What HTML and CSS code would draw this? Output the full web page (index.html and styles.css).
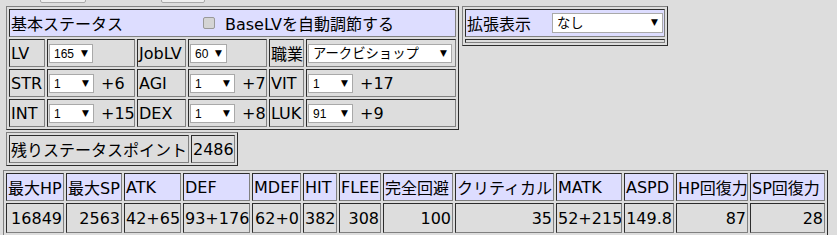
FILE: index.html
```html
<!DOCTYPE html>
<html lang="ja">
<head>
  <meta charset="UTF-8">
  <title>ステータス計算</title>
  <link rel="stylesheet" href="styles.css">
</head>
<body>
  <!-- buttons above, scrolled out of view -->
  <div class="peek">
    <button class="peek-btn" aria-label="読込"></button>
    <button class="peek-btn peek-second" aria-label="保存"></button>
  </div>

  <div class="top">
    <div class="left">
      <!-- 基本ステータス -->
      <table class="grid status">
        <colgroup>
          <col class="c-lv"><col class="c-sel1"><col class="c-job"><col class="c-sel2"><col class="c-class"><col class="c-sel3">
        </colgroup>
        <tr class="row">
          <td colspan="6" class="head">
            <span class="title-label">基本ステータス</span><span class="check"></span><span class="check-text">BaseLVを自動調節する</span>
          </td>
        </tr>
        <tr class="row">
          <td>LV</td>
          <td><span class="sel"><select class="num w-lv"><option>165</option></select></span></td>
          <td>JobLV</td>
          <td><span class="sel"><select class="num w-job"><option>60</option></select></span></td>
          <td>職業</td>
          <td><span class="sel"><select class="w-class"><option>アークビショップ</option></select></span></td>
        </tr>
        <tr class="row">
          <td>STR</td>
          <td><span class="sel"><select class="num w-stat"><option>1</option></select></span><span class="bonus">+6</span></td>
          <td>AGI</td>
          <td><span class="sel"><select class="num w-stat"><option>1</option></select></span><span class="bonus">+7</span></td>
          <td>VIT</td>
          <td><span class="sel"><select class="num w-stat"><option>1</option></select></span><span class="bonus">+17</span></td>
        </tr>
        <tr class="row">
          <td>INT</td>
          <td><span class="sel"><select class="num w-stat"><option>1</option></select></span><span class="bonus">+15</span></td>
          <td>DEX</td>
          <td><span class="sel"><select class="num w-stat"><option>1</option></select></span><span class="bonus">+8</span></td>
          <td>LUK</td>
          <td><span class="sel"><select class="num w-stat"><option>91</option></select></span><span class="bonus">+9</span></td>
        </tr>
      </table>

      <!-- 残りポイント -->
      <table class="grid points">
        <colgroup><col class="c-rest"><col class="c-restval"></colgroup>
        <tr class="row">
          <td>残りステータスポイント</td>
          <td>2486</td>
        </tr>
      </table>
    </div>

    <!-- 拡張表示 -->
    <table class="grid extra">
      <tr class="row">
        <td class="head"><span class="extra-label">拡張表示</span><span class="sel"><select class="w-extra"><option>なし</option></select></span></td>
      </tr>
      <tr class="empty-row"><td></td></tr>
    </table>
  </div>

  <!-- 計算結果 -->
  <table class="grid stats">
    <colgroup>
      <col class="s1"><col class="s2"><col class="s3"><col class="s4"><col class="s5"><col class="s6"><col class="s7">
      <col class="s8"><col class="s9"><col class="s10"><col class="s11"><col class="s12"><col class="s13">
    </colgroup>
    <tr class="stats-head">
      <td>最大HP</td><td>最大SP</td><td>ATK</td><td>DEF</td><td>MDEF</td><td>HIT</td><td>FLEE</td>
      <td>完全回避</td><td>クリティカル</td><td>MATK</td><td>ASPD</td><td>HP回復力</td><td>SP回復力</td>
    </tr>
    <tr class="stats-val">
      <td>16849</td><td>2563</td><td>42+65</td><td>93+176</td><td>62+0</td><td>382</td><td>308</td>
      <td>100</td><td>35</td><td>52+215</td><td>149.8</td><td>87</td><td>28</td>
    </tr>
  </table>
</body>
</html>
```

FILE: styles.css
```css
/* Page */
body {
  margin: 0;
  padding: 0 3px;
  background-color: #ddd;
  color: #000;
  font-family: "DejaVu Sans", "Noto Sans CJK JP", sans-serif;
  font-size: 16px;
}

/* Buttons cut off at the top edge */
.peek {
  display: flex;
  align-items: flex-end;
  height: 3px;
  overflow: hidden;
  padding-left: 37px;
  margin-bottom: 3px;
}

.peek-btn {
  width: 46px;
  height: 20px;
  flex: none;
  padding: 0;
  background-color: #efefef;
  border: 1px solid #a9a9a9;
  border-radius: 2px;
}

.peek-second {
  width: 44px;
  margin-left: 75px;
}

.top {
  display: flex;
  align-items: flex-start;
  gap: 3px;
  padding-left: 3px;
}

/* Tables */
.grid {
  border: 1px outset gray;
  border-collapse: separate;
  border-spacing: 2px;
  table-layout: fixed;
  box-sizing: border-box;
}

.grid td {
  border: 1px inset gray;
  padding: 1px;
  box-sizing: border-box;
  white-space: nowrap;
  overflow: hidden;
  vertical-align: middle;
}

.grid .head {
  background-color: #ddf;
}

.row td {
  height: 28px;
}

/* 基本ステータス */
.status {
  width: 453px;
}

.c-lv { width: 36px; }
.c-sel1 { width: 88px; }
.c-job { width: 49px; }
.c-sel2 { width: 79px; }
.c-class { width: 35px; }
.c-sel3 { width: 150px; }

.title-label {
  display: inline-block;
  width: 192px;
  vertical-align: middle;
}

.check {
  display: inline-block;
  width: 10px;
  height: 10px;
  border: 1px solid #999;
  border-radius: 2px;
  background-color: #d4d4d4;
  vertical-align: middle;
}

.check-text {
  margin-left: 10px;
  vertical-align: middle;
}

.bonus {
  margin-left: 7px;
  vertical-align: middle;
}

/* Select boxes */
.sel {
  position: relative;
  display: inline-block;
  vertical-align: middle;
}

.sel::after {
  content: "\25BC";
  position: absolute;
  right: 5px;
  top: 5px;
  font-size: 9px;
  line-height: 9px;
  pointer-events: none;
}

.sel select {
  appearance: none;
  -webkit-appearance: none;
  display: block;
  height: 19px;
  margin: 0;
  padding: 0 0 0 4px;
  background-color: #fff;
  border: 1px solid #a9a9a9;
  border-radius: 0;
  color: #000;
  font-family: "Liberation Sans", "Noto Sans CJK JP", sans-serif;
  font-size: 13.33px;
}

.sel select.num {
  font-size: 12px;
}

.w-lv { width: 44px; }
.w-job { width: 37px; }
.w-stat { width: 45px; }
.w-class { width: 144px; }
.w-extra { width: 111px; height: 20px !important; }

/* 残りステータスポイント */
.points {
  width: 232px;
  margin-top: 2px;
}

.c-rest { width: 180px; }
.c-restval { width: 44px; }

/* 拡張表示 */
.extra {
  width: 206px;
}

.extra-label {
  display: inline-block;
  width: 85px;
  vertical-align: middle;
}

.empty-row td {
  height: 4px;
  padding: 0;
}

/* 計算結果 */
.stats {
  width: 825px;
  margin-top: 4px;
}

.s1 { width: 58px; }
.s2 { width: 56px; }
.s3 { width: 57px; }
.s4 { width: 67px; }
.s5 { width: 49px; }
.s6 { width: 34px; }
.s7 { width: 42px; }
.s8 { width: 70px; }
.s9 { width: 99px; }
.s10 { width: 66px; }
.s11 { width: 50px; }
.s12 { width: 72px; }
.s13 { width: 75px; }

.stats-head td {
  height: 26px;
  background-color: #ddf;
}

.stats-val td {
  height: 30px;
  text-align: right;
}
```
